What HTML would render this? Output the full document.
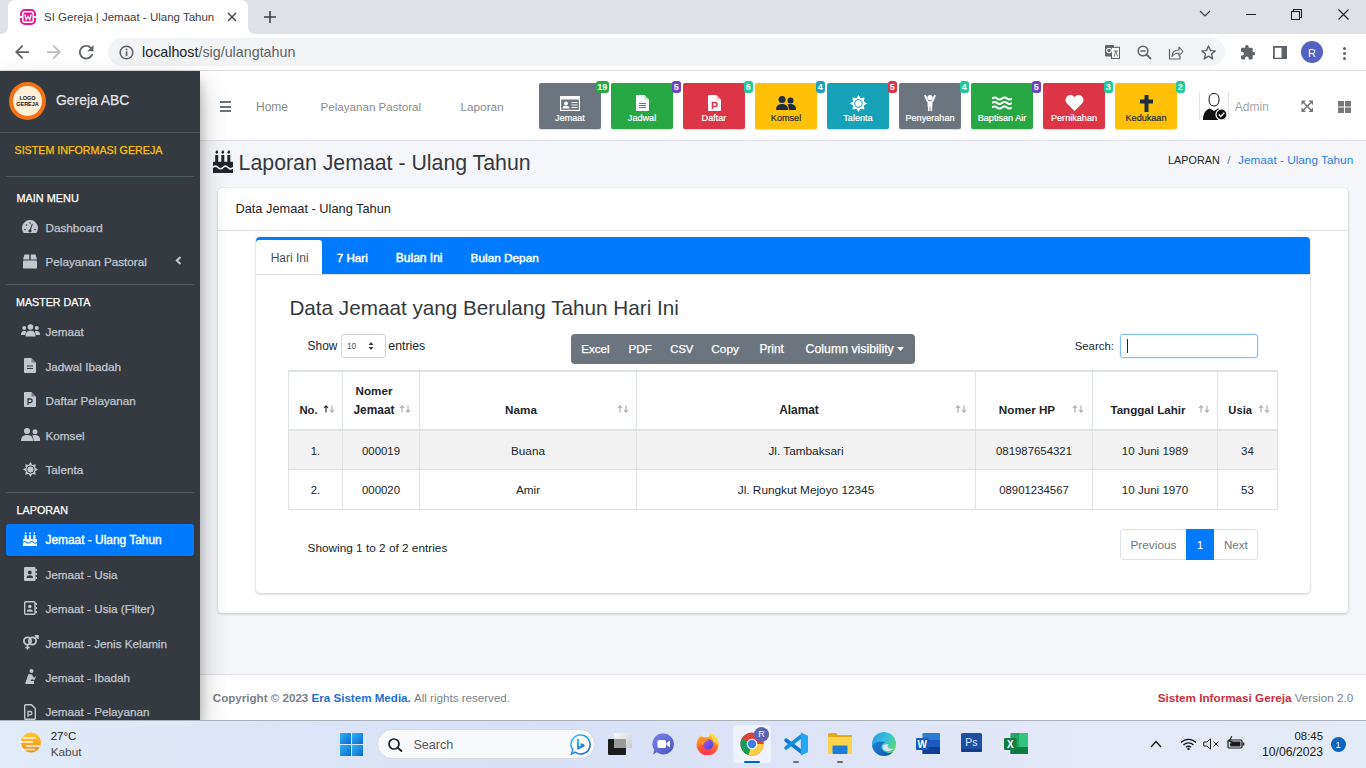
<!DOCTYPE html>
<html><head><meta charset="utf-8">
<style>
*{box-sizing:border-box;margin:0;padding:0}
html,body{width:1366px;height:768px;overflow:hidden;font-family:"Liberation Sans",sans-serif;background:#f4f6f9;position:relative}
.t{position:absolute;white-space:nowrap}
.r{position:absolute}
</style></head><body>
<div class="r" style="left:0px;top:0px;width:1366px;height:34px;background:#dee1e6;"></div>
<div class="r" style="left:0px;top:34px;width:1366px;height:37px;background:#fff;"></div>
<div class="r" style="left:0px;top:70px;width:1366px;height:1px;background:#dadce0;"></div>
<svg class="r" style="left:0;top:0" width="260" height="34" viewBox="0 0 260 34"><path d="M0 34 Q8 34 8 26 L8 8 Q8 0 16 0 L240 0 Q248 0 248 8 L248 26 Q248 34 256 34 Z" fill="#fff"/></svg>
<svg class="r" style="left:20px;top:9px;" width="16" height="16" viewBox="0 0 16 16"><rect x="1" y="1" width="14" height="14" rx="4" fill="none" stroke="#e6198f" stroke-width="2"/><rect x="3.5" y="3.5" width="9" height="9" rx="1.5" fill="#e6198f"/><path d="M4.8 5.5 L6.2 10.5 L8 7.5 L9.8 10.5 L11.2 5.5" fill="none" stroke="#fff" stroke-width="1.3"/><rect x="0" y="7" width="2" height="2" fill="#fff"/><rect x="14" y="7" width="2" height="2" fill="#fff"/></svg>
<div class="t" style="top:7.02px;font-size:11.5px;line-height:20px;color:#3c4043;left:44px;">SI Gereja | Jemaat - Ulang Tahun</div>
<svg class="r" style="left:227px;top:12px;" width="10" height="10" viewBox="0 0 10 10"><path d="M1 1L9 9M9 1L1 9" stroke="#3c4043" stroke-width="1.4"/></svg>
<svg class="r" style="left:264px;top:11px;" width="12" height="12" viewBox="0 0 12 12"><path d="M6 0V12M0 6H12" stroke="#3c4043" stroke-width="1.6"/></svg>
<svg class="r" style="left:1199px;top:10px;" width="12" height="8" viewBox="0 0 12 8"><path d="M1 1L6 6L11 1" fill="none" stroke="#3c4043" stroke-width="1.2"/></svg>
<div class="r" style="left:1246px;top:14px;width:10px;height:1px;background:#202124;"></div>
<svg class="r" style="left:1291px;top:9px;" width="12" height="11" viewBox="0 0 12 11"><rect x="0.5" y="2.5" width="8" height="8" fill="none" stroke="#202124" stroke-width="1.1"/><path d="M2.5 2.5V0.5H10.5V8.5H8.5" fill="none" stroke="#202124" stroke-width="1.1"/></svg>
<svg class="r" style="left:1338px;top:9px;" width="11" height="11" viewBox="0 0 11 11"><path d="M0.5 0.5L10.5 10.5M10.5 0.5L0.5 10.5" stroke="#202124" stroke-width="1.2"/></svg>
<svg class="r" style="left:15px;top:45px;" width="14" height="14" viewBox="4 4 16 16"><path d="M20 11H7.83l5.59-5.59L12 4l-8 8 8 8 1.41-1.41L7.83 13H20v-2z" fill="#5f6368"/></svg>
<svg class="r" style="left:47px;top:45px;" width="14" height="14" viewBox="4 4 16 16"><path d="M12 4l-1.41 1.41L16.17 11H4v2h12.17l-5.58 5.59L12 20l8-8z" fill="#babcbe"/></svg>
<svg class="r" style="left:79px;top:45px;" width="14.5" height="14.5" viewBox="4 4 16 16"><path d="M17.65 6.35C16.2 4.9 14.21 4 12 4c-4.42 0-7.99 3.58-7.99 8s3.57 8 7.99 8c3.73 0 6.84-2.55 7.73-6h-2.08c-.82 2.33-3.04 4-5.650 4-3.31 0-6-2.69-6-6s2.69-6 6-6c1.66 0 3.14.69 4.22 1.78L13 11h7V4l-2.35 2.35z" fill="#5f6368"/></svg>
<div class="r" style="left:108px;top:38px;width:1117px;height:28px;background:#f1f3f4;border-radius:14px;"></div>
<svg class="r" style="left:119px;top:45px;" width="15" height="15" viewBox="0 0 15 15"><circle cx="7.5" cy="7.5" r="6.3" fill="none" stroke="#5f6368" stroke-width="1.6"/><rect x="6.7" y="6.3" width="1.7" height="4.8" fill="#5f6368"/><rect x="6.7" y="3.6" width="1.7" height="1.7" fill="#5f6368"/></svg>
<div class="t" style="top:41.65px;font-size:14.3px;line-height:20px;color:#202124;left:142px;">localhost<span style="color:#5f6368">/sig/ulangtahun</span></div>
<svg class="r" style="left:1105px;top:45px;" width="15" height="14" viewBox="0 0 15 14"><rect x="0" y="0" width="9" height="11.5" rx="1" fill="#5f6368"/><rect x="6.5" y="2.3" width="8" height="11.2" fill="#fff" stroke="#5f6368" stroke-width="1.1"/><circle cx="4" cy="5.5" r="2.3" fill="none" stroke="#fff" stroke-width="1.1"/><path d="M8.5 6H13M10.7 6L9.3 11.5M10.7 6L12.6 11.5" stroke="#5f6368" stroke-width="0.9" fill="none"/></svg>
<svg class="r" style="left:1137px;top:45px;" width="15" height="15" viewBox="0 0 15 15"><circle cx="6" cy="6" r="4.8" fill="none" stroke="#5f6368" stroke-width="1.6"/><path d="M9.5 9.5L14 14" stroke="#5f6368" stroke-width="1.8"/><path d="M3.5 6H8.5" stroke="#5f6368" stroke-width="1.5"/></svg>
<svg class="r" style="left:1168px;top:45px;" width="16" height="15" viewBox="0 0 16 15"><path d="M1.5 4V14H12V11" fill="none" stroke="#5f6368" stroke-width="1.2"/><path d="M4 11.5C4 7 7 5 11 5V2L15 6.5L11 11V8C8 8 6 9 4 11.5Z" fill="none" stroke="#5f6368" stroke-width="1.1" stroke-linejoin="round"/></svg>
<svg class="r" style="left:1201px;top:45px;" width="15" height="15" viewBox="0 0 15 15"><path d="M7.5 1L9.4 5.6L14.2 5.9L10.5 9L11.7 13.8L7.5 11.1L3.3 13.8L4.5 9L0.8 5.9L5.6 5.6Z" fill="none" stroke="#5f6368" stroke-width="1.4" stroke-linejoin="round"/></svg>
<svg class="r" style="left:1240.5px;top:45px;" width="14.5" height="14.5" viewBox="2 1 21 21"><path d="M20.5 11H19V7c0-1.1-.9-2-2-2h-4V3.5C13 2.12 11.88 1 10.5 1S8 2.12 8 3.5V5H4c-1.1 0-1.99.9-1.99 2v3.8H3.5c1.49 0 2.7 1.21 2.7 2.7s-1.21 2.7-2.7 2.7H2V20c0 1.1.9 2 2 2h3.8v-1.5c0-1.49 1.21-2.7 2.7-2.7 1.490 0 2.7 1.21 2.7 2.7V22H17c1.1 0 2-.9 2-2v-4h1.5c1.38 0 2.5-1.12 2.5-2.5S21.88 11 20.5 11z" fill="#5f6368"/></svg>
<svg class="r" style="left:1273px;top:45.5px;" width="14" height="13.5" viewBox="0 0 14 13.5"><rect x="0.9" y="0.9" width="12.2" height="11.7" fill="none" stroke="#5f6368" stroke-width="1.8"/><rect x="8.5" y="0.9" width="4.6" height="11.7" fill="#5f6368"/></svg>
<div class="r" style="left:1301px;top:41px;width:22px;height:22px;border-radius:50%;background:#5462c2"></div>
<div class="t" style="top:42.69px;font-size:11px;line-height:20px;color:#fff;left:1301.0px;width:22px;text-align:center;left:1301px;">R</div>
<div class="r" style="left:1343px;top:47px;width:3px;height:3px;background:#5f6368;border-radius:50%;"></div>
<div class="r" style="left:1343px;top:52px;width:3px;height:3px;background:#5f6368;border-radius:50%;"></div>
<div class="r" style="left:1343px;top:57px;width:3px;height:3px;background:#5f6368;border-radius:50%;"></div>
<div class="r" style="left:0px;top:71px;width:200px;height:649px;background:#343a40;box-shadow:0 14px 28px rgba(0,0,0,.25),0 10px 10px rgba(0,0,0,.22);z-index:5;"></div>
<div class="r" style="left:0;top:71px;width:200px;height:649px;z-index:6;overflow:hidden">
<div class="r" style="left:9px;top:81.5px;width:37px;height:38.5px;border-radius:50%;background:#fdf0d6;border:4px solid #f47216;margin-top:-71px"></div>
<div class="t" style="left:12px;top:24px;width:31px;text-align:center;font-size:5.5px;line-height:6px;font-weight:bold;color:#111">LOGO<br>GEREJA</div>
<div class="t" style="top:18.98px;font-size:13.9px;line-height:20px;color:rgba(255,255,255,.85);left:56px;-webkit-text-stroke:0.25px;">Gereja ABC</div>
<div class="r" style="left:0;top:61px;width:200px;height:1px;background:#4b545c"></div>
<div class="t" style="top:69.29px;font-size:10.7px;line-height:20px;color:#ffc107;left:14.5px;-webkit-text-stroke:0.25px;">SISTEM INFORMASI GEREJA</div>
<div class="r" style="left:6px;top:105px;width:188px;height:1px;background:#4f5962"></div>
<div class="t" style="top:116.82px;font-size:10.9px;line-height:20px;color:#fff;left:16.5px;-webkit-text-stroke:0.25px;">MAIN MENU</div>
<div class="t" style="top:146.95px;font-size:11.7px;line-height:20px;color:#c2c7d0;left:45.5px;-webkit-text-stroke:0.25px;">Dashboard</div>
<div class="t" style="top:180.85px;font-size:11.7px;line-height:20px;color:#c2c7d0;left:45.5px;-webkit-text-stroke:0.25px;">Pelayanan Pastoral</div>
<div class="r" style="left:6px;top:213px;width:188px;height:1px;background:#4f5962"></div>
<div class="t" style="top:221.09px;font-size:10.7px;line-height:20px;color:#fff;left:16px;-webkit-text-stroke:0.25px;">MASTER DATA</div>
<div class="t" style="top:251.25px;font-size:11.7px;line-height:20px;color:#c2c7d0;left:45.5px;-webkit-text-stroke:0.25px;">Jemaat</div>
<div class="t" style="top:285.95px;font-size:11.7px;line-height:20px;color:#c2c7d0;left:45.5px;-webkit-text-stroke:0.25px;">Jadwal Ibadah</div>
<div class="t" style="top:320.25px;font-size:11.7px;line-height:20px;color:#c2c7d0;left:45.5px;-webkit-text-stroke:0.25px;">Daftar Pelayanan</div>
<div class="t" style="top:354.95px;font-size:11.7px;line-height:20px;color:#c2c7d0;left:45.5px;-webkit-text-stroke:0.25px;">Komsel</div>
<div class="t" style="top:388.75px;font-size:11.7px;line-height:20px;color:#c2c7d0;left:45.5px;-webkit-text-stroke:0.25px;">Talenta</div>
<div class="r" style="left:6px;top:421px;width:188px;height:1px;background:#4f5962"></div>
<div class="t" style="top:429.26px;font-size:10.8px;line-height:20px;color:#fff;left:16.5px;-webkit-text-stroke:0.25px;">LAPORAN</div>
<div class="r" style="left:6px;top:453px;width:188px;height:32px;background:#007bff;border-radius:3px;box-shadow:0 1px 3px rgba(0,0,0,.12)"></div>
<div class="t" style="top:459.38px;font-size:11.9px;line-height:20px;color:#fff;left:45.5px;-webkit-text-stroke:0.4px;">Jemaat - Ulang Tahun</div>
<div class="t" style="top:494.25px;font-size:11.7px;line-height:20px;color:#c2c7d0;left:45.5px;-webkit-text-stroke:0.25px;">Jemaat - Usia</div>
<div class="t" style="top:528.35px;font-size:11.7px;line-height:20px;color:#c2c7d0;left:45.5px;-webkit-text-stroke:0.25px;">Jemaat - Usia (Filter)</div>
<div class="t" style="top:563.15px;font-size:11.7px;line-height:20px;color:#c2c7d0;left:45.5px;-webkit-text-stroke:0.25px;">Jemaat - Jenis Kelamin</div>
<div class="t" style="top:596.65px;font-size:11.7px;line-height:20px;color:#c2c7d0;left:45.5px;-webkit-text-stroke:0.25px;">Jemaat - Ibadah</div>
<div class="t" style="top:630.95px;font-size:11.7px;line-height:20px;color:#c2c7d0;left:45.5px;-webkit-text-stroke:0.25px;">Jemaat - Pelayanan</div>
<svg class="r" style="left:22px;top:149px;" width="16" height="13" viewBox="0 0 16 13"><path d="M1.76 13A8 8 0 1 1 14.24 13Z" fill="#c2c7d0"/><circle cx="8" cy="10.8" r="1.6" fill="#343a40"/><path d="M8 10.8L10.3 3.8" stroke="#343a40" stroke-width="1.1"/><circle cx="3" cy="9.5" r="0.8" fill="#343a40"/><circle cx="13" cy="9.5" r="0.8" fill="#343a40"/><circle cx="4.5" cy="5" r="0.8" fill="#343a40"/><circle cx="8" cy="3" r="0.8" fill="#343a40"/></svg>
<svg class="r" style="left:22px;top:183px;" width="16" height="15" viewBox="0 0 16 15"><path d="M1 5.5L2.5 0.5H7.3V5.5Z M8.7 0.5H13.5L15 5.5H8.7Z" fill="#c2c7d0"/><rect x="1" y="6.5" width="14" height="8" rx="1" fill="#c2c7d0"/></svg>
<svg class="r" style="left:21px;top:253px;" width="19" height="13" viewBox="0 0 19 13"><circle cx="9.5" cy="3" r="2.8" fill="#c2c7d0"/><circle cx="3.2" cy="4" r="2" fill="#c2c7d0"/><circle cx="15.8" cy="4" r="2" fill="#c2c7d0"/><path d="M4.5 12.5C4.5 8 6.5 6.8 9.5 6.8S14.5 8 14.5 12.5Z" fill="#c2c7d0"/><path d="M0 11C0 8.5 1 7 3.2 7S5 7.5 5 8L4 11Z M19 11C19 8.5 18 7 15.8 7S14 7.5 14 8L15 11Z" fill="#c2c7d0"/></svg>
<svg class="r" style="left:24px;top:287px;" width="12" height="15" viewBox="0 0 12 15"><path d="M0 1A1 1 0 0 1 1 0H7.5L12 4.5V14A1 1 0 0 1 11 15H1A1 1 0 0 1 0 14Z" fill="#c2c7d0"/><path d="M7.5 0V4.5H12" fill="#343a40" opacity=".5"/><path d="M3 8H9M3 10.5H9" stroke="#343a40" stroke-width="1"/></svg>
<svg class="r" style="left:24px;top:321px;" width="12" height="15" viewBox="0 0 12 15"><path d="M0 1A1 1 0 0 1 1 0H7.5L12 4.5V14A1 1 0 0 1 11 15H1A1 1 0 0 1 0 14Z" fill="#c2c7d0"/><path d="M7.5 0V4.5H12" fill="#343a40" opacity=".5"/><path d="M4 13V7H6.3A1.8 1.8 0 0 1 6.3 10.6H4" fill="none" stroke="#343a40" stroke-width="1.3"/></svg>
<svg class="r" style="left:21px;top:357px;" width="19" height="13" viewBox="0 0 19 13"><circle cx="6" cy="3" r="3" fill="#c2c7d0"/><circle cx="14" cy="3.8" r="2.5" fill="#c2c7d0"/><path d="M0 13C0 9 2 7 6 7S12 9 12 13Z" fill="#c2c7d0"/><path d="M12.5 13C12.5 10 12 8.5 11 7.6C11.8 7.2 12.8 7 14 7C17 7 19 8.5 19 11.5V13Z" fill="#c2c7d0"/></svg>
<svg class="r" style="left:23px;top:391px;" width="15" height="15" viewBox="0 0 15 15"><path d="M7.5 0L9.3 2.9L12.8 2.2L12.1 5.7L15 7.5L12.1 9.3L12.8 12.8L9.3 12.1L7.5 15L5.7 12.1L2.2 12.8L2.9 9.3L0 7.5L2.9 5.7L2.2 2.2L5.7 2.9Z" fill="#c2c7d0"/><circle cx="7.5" cy="7.5" r="3.6" fill="none" stroke="#343a40" stroke-width="1"/></svg>
<svg class="r" style="left:23px;top:461px;" width="14" height="14" viewBox="0 0 14 14"><rect x="0" y="7.2" width="14" height="6.8" fill="#fff"/><path d="M0 10.3Q1.75 8.8 3.5 10.3T7 10.3T10.5 10.3T14 10.3" stroke="#007bff" stroke-width="1.1" fill="none"/><rect x="1.6" y="3" width="2.1" height="4.5" fill="#fff"/><rect x="5.95" y="3" width="2.1" height="4.5" fill="#fff"/><rect x="10.3" y="3" width="2.1" height="4.5" fill="#fff"/><path d="M2.65 0C3.8 1.1 3.8 2.3 2.65 2.3S1.5 1.1 2.65 0Z M7 0C8.15 1.1 8.15 2.3 7 2.3S5.85 1.1 7 0Z M11.35 0C12.5 1.1 12.5 2.3 11.35 2.3S10.2 1.1 11.35 0Z" fill="#fff"/></svg>
<svg class="r" style="left:24px;top:496px;" width="13" height="14" viewBox="0 0 13 14"><rect x="0" y="0" width="11.5" height="14" rx="1" fill="#c2c7d0"/><rect x="11.5" y="2" width="1.5" height="2" fill="#c2c7d0"/><rect x="11.5" y="6" width="1.5" height="2" fill="#c2c7d0"/><rect x="11.5" y="10" width="1.5" height="2" fill="#c2c7d0"/><circle cx="5.8" cy="5.5" r="1.9" fill="#343a40"/><path d="M2.5 11C2.5 9 4 8.3 5.8 8.3S9 9 9 11Z" fill="#343a40"/></svg>
<svg class="r" style="left:24px;top:530px;" width="13" height="14" viewBox="0 0 13 14"><rect x="0.7" y="0.7" width="10.3" height="12.6" rx="1" fill="none" stroke="#c2c7d0" stroke-width="1.4"/><rect x="11.5" y="2" width="1.5" height="2" fill="#c2c7d0"/><rect x="11.5" y="6" width="1.5" height="2" fill="#c2c7d0"/><rect x="11.5" y="10" width="1.5" height="2" fill="#c2c7d0"/><circle cx="5.8" cy="5.5" r="1.8" fill="#c2c7d0"/><path d="M2.8 10.8C2.8 9 4 8.3 5.8 8.3S8.8 9 8.8 10.8Z" fill="#c2c7d0"/></svg>
<svg class="r" style="left:22px;top:564px;" width="17" height="15" viewBox="0 0 17 15"><circle cx="5.5" cy="6" r="3.6" fill="none" stroke="#c2c7d0" stroke-width="1.8"/><path d="M5.5 9.6V14.5M3.3 12.5H7.7" stroke="#c2c7d0" stroke-width="1.6"/><circle cx="10.5" cy="6" r="3.6" fill="none" stroke="#c2c7d0" stroke-width="1.8"/><path d="M13 3.5L15.8 0.7M12.8 0.8H16V4" stroke="#c2c7d0" stroke-width="1.6" fill="none"/></svg>
<svg class="r" style="left:25px;top:598px;" width="11" height="15" viewBox="0 0 11 15"><circle cx="6.5" cy="2" r="2" fill="#c2c7d0"/><path d="M3.5 5L7 5.5L9 9L10.5 7L11 8L9 11.5L7 10L5.5 12H9V15H1A1 1 0 0 1 0.5 13.5Z" fill="#c2c7d0"/></svg>
<svg class="r" style="left:24px;top:633px;" width="12" height="16" viewBox="0 0 12 16"><path d="M0.7 1.5A0.8 0.8 0 0 1 1.5 0.7H7.5L11.3 4.5V14.5A0.8 0.8 0 0 1 10.5 15.3H1.5A0.8 0.8 0 0 1 0.7 14.5Z" fill="none" stroke="#c2c7d0" stroke-width="1.4"/><path d="M4 13V7.5H6.2A1.7 1.7 0 0 1 6.2 10.9H4" fill="none" stroke="#c2c7d0" stroke-width="1.3"/></svg>
<svg class="r" style="left:175px;top:185px;" width="7" height="9" viewBox="0 0 7 9"><path d="M5.5 1L1.8 4.5L5.5 8" fill="none" stroke="#c2c7d0" stroke-width="2"/></svg>
</div>
<div class="r" style="left:200px;top:71px;width:1166px;height:70px;background:#fff;border-bottom:1px solid #dee2e6;"></div>
<div class="r" style="left:219.5px;top:101px;width:11.5px;height:2px;background:#6c757d;"></div>
<div class="r" style="left:219.5px;top:105.5px;width:11.5px;height:2px;background:#6c757d;"></div>
<div class="r" style="left:219.5px;top:110px;width:11.5px;height:2px;background:#6c757d;"></div>
<div class="t" style="top:96.64px;font-size:12px;line-height:20px;color:rgba(0,0,0,.5);left:256px;">Home</div>
<div class="t" style="top:96.78px;font-size:11.6px;line-height:20px;color:rgba(0,0,0,.5);left:320.6px;">Pelayanan Pastoral</div>
<div class="t" style="top:96.71px;font-size:11.8px;line-height:20px;color:rgba(0,0,0,.5);left:460.4px;">Laporan</div>
<div class="r" style="left:539px;top:83px;width:62px;height:46px;background:#6c757d;border-radius:2px;box-shadow:0 1px 1px rgba(0,0,0,.15);"></div>
<svg class="r" style="left:560.0px;top:95.5px;" width="20" height="15" viewBox="0 0 20 15"><rect x="0.5" y="0.5" width="19" height="14" fill="none" stroke="#fff" stroke-width="1.3"/><rect x="0.5" y="0.5" width="19" height="3" fill="#fff"/><circle cx="6" cy="7.5" r="2" fill="#fff"/><path d="M2.5 12.5C2.5 10.5 4 9.8 6 9.8S9.5 10.5 9.5 12.5Z" fill="#fff"/><path d="M11.5 6.5H17.5M11.5 9H17.5M11.5 11.5H17.5" stroke="#fff" stroke-width="1.2"/></svg>
<div class="t" style="top:108.15px;font-size:9.1px;line-height:20px;color:#fff;left:539.0px;width:62px;text-align:center;-webkit-text-stroke:0.2px;">Jemaat</div>
<div class="r" style="left:595.5px;top:81px;width:13.5px;height:11.5px;background:#28a745;border-radius:3px;"></div>
<div class="t" style="top:77.28px;font-size:9px;line-height:20px;color:#fff;font-weight:bold;left:593.5px;width:17.5px;text-align:center;">19</div>
<div class="r" style="left:611px;top:83px;width:62px;height:46px;background:#28a745;border-radius:2px;box-shadow:0 1px 1px rgba(0,0,0,.15);"></div>
<svg class="r" style="left:635.5px;top:95px;" width="13" height="16" viewBox="0 0 13 16"><path d="M0 0.8A0.8 0.8 0 0 1 0.8 0H8.5L13 4.5V15.2A0.8 0.8 0 0 1 12.2 16H0.8A0.8 0.8 0 0 1 0 15.2Z" fill="#fff"/><path d="M8.5 0V4.5H13Z" fill="#28a745" opacity=".35"/><path d="M3 8.5H10M3 10.5H10M3 12.5H10" stroke="#28a745" stroke-width="1"/></svg>
<div class="t" style="top:108.15px;font-size:9.1px;line-height:20px;color:#fff;left:611.0px;width:62px;text-align:center;-webkit-text-stroke:0.2px;">Jadwal</div>
<div class="r" style="left:671.5px;top:81px;width:9.5px;height:11.5px;background:#6f42c1;border-radius:3px;"></div>
<div class="t" style="top:77.28px;font-size:9px;line-height:20px;color:#fff;font-weight:bold;left:669.5px;width:13.5px;text-align:center;">5</div>
<div class="r" style="left:683px;top:83px;width:62px;height:46px;background:#dc3545;border-radius:2px;box-shadow:0 1px 1px rgba(0,0,0,.15);"></div>
<svg class="r" style="left:707.5px;top:95px;" width="13" height="16" viewBox="0 0 13 16"><path d="M0 0.8A0.8 0.8 0 0 1 0.8 0H8.5L13 4.5V15.2A0.8 0.8 0 0 1 12.2 16H0.8A0.8 0.8 0 0 1 0 15.2Z" fill="#fff"/><path d="M8.5 0V4.5H13Z" fill="#dc3545" opacity=".35"/><path d="M4.5 14V7.5H7A2 2 0 0 1 7 11.5H4.5" fill="none" stroke="#dc3545" stroke-width="1.6"/></svg>
<div class="t" style="top:108.15px;font-size:9.1px;line-height:20px;color:#fff;left:683.0px;width:62px;text-align:center;-webkit-text-stroke:0.2px;">Daftar</div>
<div class="r" style="left:743.5px;top:81px;width:9.5px;height:11.5px;background:#20c997;border-radius:3px;"></div>
<div class="t" style="top:77.28px;font-size:9px;line-height:20px;color:#fff;font-weight:bold;left:741.5px;width:13.5px;text-align:center;">6</div>
<div class="r" style="left:755px;top:83px;width:62px;height:46px;background:#ffc107;border-radius:2px;box-shadow:0 1px 1px rgba(0,0,0,.15);"></div>
<svg class="r" style="left:776.0px;top:96px;" width="20" height="14" viewBox="0 0 20 14"><circle cx="6" cy="3.5" r="3.5" fill="#1f2d3d"/><circle cx="14.5" cy="4.5" r="3" fill="#1f2d3d"/><path d="M0 14C0 10 2 8 6 8S12 10 12 14Z" fill="#1f2d3d"/><path d="M12.8 14C12.8 11 12.3 9.5 11.2 8.6C12 8.2 13 8 14.5 8C17.5 8 20 9.5 20 12.5V14Z" fill="#1f2d3d"/></svg>
<div class="t" style="top:108.15px;font-size:9.1px;line-height:20px;color:#1f2d3d;left:755.0px;width:62px;text-align:center;-webkit-text-stroke:0.2px;">Komsel</div>
<div class="r" style="left:815.5px;top:81px;width:9.5px;height:11.5px;background:#17a2b8;border-radius:3px;"></div>
<div class="t" style="top:77.28px;font-size:9px;line-height:20px;color:#fff;font-weight:bold;left:813.5px;width:13.5px;text-align:center;">4</div>
<div class="r" style="left:827px;top:83px;width:62px;height:46px;background:#17a2b8;border-radius:2px;box-shadow:0 1px 1px rgba(0,0,0,.15);"></div>
<svg class="r" style="left:849.5px;top:94.5px;" width="17" height="17" viewBox="0 0 17 17"><path d="M8.5 0L10.5 3.2L14.5 2.5L13.8 6.5L17 8.5L13.8 10.5L14.5 14.5L10.5 13.8L8.5 17L6.5 13.8L2.5 14.5L3.2 10.5L0 8.5L3.2 6.5L2.5 2.5L6.5 3.2Z" fill="#fff"/><circle cx="8.5" cy="8.5" r="4.2" fill="#17a2b8"/><circle cx="8.5" cy="8.5" r="3.2" fill="#fff"/></svg>
<div class="t" style="top:108.15px;font-size:9.1px;line-height:20px;color:#fff;left:827.0px;width:62px;text-align:center;-webkit-text-stroke:0.2px;">Talenta</div>
<div class="r" style="left:887.5px;top:81px;width:9.5px;height:11.5px;background:#dc3545;border-radius:3px;"></div>
<div class="t" style="top:77.28px;font-size:9px;line-height:20px;color:#fff;font-weight:bold;left:885.5px;width:13.5px;text-align:center;">5</div>
<div class="r" style="left:899px;top:83px;width:62px;height:46px;background:#6c757d;border-radius:2px;box-shadow:0 1px 1px rgba(0,0,0,.15);"></div>
<svg class="r" style="left:924.0px;top:95px;" width="12" height="16" viewBox="0 0 12 16"><circle cx="6" cy="2.6" r="2.6" fill="#fff"/><path d="M1.2 0.8L3.6 6.2M10.8 0.8L8.4 6.2" stroke="#fff" stroke-width="1.9" stroke-linecap="round"/><path d="M3.6 6.2H8.4V11.5H8.1V16H6.4V12H5.6V16H3.9V11.5H3.6Z" fill="#fff"/></svg>
<div class="t" style="top:108.15px;font-size:9.1px;line-height:20px;color:#fff;left:899.0px;width:62px;text-align:center;-webkit-text-stroke:0.2px;">Penyerahan</div>
<div class="r" style="left:959.5px;top:81px;width:9.5px;height:11.5px;background:#20c997;border-radius:3px;"></div>
<div class="t" style="top:77.28px;font-size:9px;line-height:20px;color:#fff;font-weight:bold;left:957.5px;width:13.5px;text-align:center;">4</div>
<div class="r" style="left:971px;top:83px;width:62px;height:46px;background:#28a745;border-radius:2px;box-shadow:0 1px 1px rgba(0,0,0,.15);"></div>
<svg class="r" style="left:992.0px;top:96px;" width="20" height="14" viewBox="0 0 20 14"><path d="M0 2.5Q2.5 0.5 5 2.5T10 2.5T15 2.5T20 2.5" fill="none" stroke="#fff" stroke-width="2"/><path d="M0 7Q2.5 5 5 7T10 7T15 7T20 7" fill="none" stroke="#fff" stroke-width="2"/><path d="M0 11.5Q2.5 9.5 5 11.5T10 11.5T15 11.5T20 11.5" fill="none" stroke="#fff" stroke-width="2"/></svg>
<div class="t" style="top:108.15px;font-size:9.1px;line-height:20px;color:#fff;left:971.0px;width:62px;text-align:center;-webkit-text-stroke:0.2px;">Baptisan Air</div>
<div class="r" style="left:1031.5px;top:81px;width:9.5px;height:11.5px;background:#6f42c1;border-radius:3px;"></div>
<div class="t" style="top:77.28px;font-size:9px;line-height:20px;color:#fff;font-weight:bold;left:1029.5px;width:13.5px;text-align:center;">5</div>
<div class="r" style="left:1043px;top:83px;width:62px;height:46px;background:#dc3545;border-radius:2px;box-shadow:0 1px 1px rgba(0,0,0,.15);"></div>
<svg class="r" style="left:1064.5px;top:95px;" width="19" height="16" viewBox="0 0 19 16"><path d="M9.5 16L1.5 8A4.5 4.5 0 0 1 9.5 2A4.5 4.5 0 0 1 17.5 8Z" fill="#fff"/></svg>
<div class="t" style="top:108.15px;font-size:9.1px;line-height:20px;color:#fff;left:1043.0px;width:62px;text-align:center;-webkit-text-stroke:0.2px;">Pernikahan</div>
<div class="r" style="left:1103.5px;top:81px;width:9.5px;height:11.5px;background:#20c997;border-radius:3px;"></div>
<div class="t" style="top:77.28px;font-size:9px;line-height:20px;color:#fff;font-weight:bold;left:1101.5px;width:13.5px;text-align:center;">3</div>
<div class="r" style="left:1115px;top:83px;width:62px;height:46px;background:#ffc107;border-radius:2px;box-shadow:0 1px 1px rgba(0,0,0,.15);"></div>
<svg class="r" style="left:1139.5px;top:94.5px;" width="13" height="17" viewBox="0 0 13 17"><path d="M4.5 0H8.5V4.5H13V8.5H8.5V17H4.5V8.5H0V4.5H4.5Z" fill="#1f2d3d"/></svg>
<div class="t" style="top:108.15px;font-size:9.1px;line-height:20px;color:#1f2d3d;left:1115.0px;width:62px;text-align:center;-webkit-text-stroke:0.2px;">Kedukaan</div>
<div class="r" style="left:1175.5px;top:81px;width:9.5px;height:11.5px;background:#20c997;border-radius:3px;"></div>
<div class="t" style="top:77.28px;font-size:9px;line-height:20px;color:#fff;font-weight:bold;left:1173.5px;width:13.5px;text-align:center;">2</div>
<div class="r" style="left:1199px;top:92px;width:1px;height:28px;background:#e2e2e2;"></div>
<div class="r" style="left:1228px;top:92px;width:1px;height:28px;background:#e2e2e2;"></div>
<svg class="r" style="left:1200px;top:92px;" width="28" height="28" viewBox="0 0 28 28"><path d="M9 8C9 3 11 1.5 14 1.5S19 3 19 8C19 11 17.5 14 14 14S9 11 9 8Z" fill="#fff" stroke="#111" stroke-width="1"/><path d="M3 28C3 21 6 17.5 10 16.5L14 19L18 16.5C22 17.5 25 21 25 28Z" fill="#111"/><circle cx="21.5" cy="22.5" r="5.5" fill="#111" stroke="#fff" stroke-width="1.2"/><path d="M18.8 22.5L20.8 24.5L24.3 20.8" fill="none" stroke="#fff" stroke-width="1.5"/></svg>
<div class="t" style="top:96.64px;font-size:12px;line-height:20px;color:rgba(0,0,0,.4);left:1234.8px;">Admin</div>
<svg class="r" style="left:1300.5px;top:99.5px;" width="12.5" height="12.5" viewBox="0 0 12.5 12.5"><path d="M2 2L10.5 10.5M10.5 2L2 10.5" stroke="#777" stroke-width="1.5"/><path d="M0.5 0.5H5L0.5 5Z M12 0.5H7.5L12 5Z M0.5 12H5L0.5 7.5Z M12 12H7.5L12 7.5Z" fill="#777"/></svg>
<svg class="r" style="left:1338px;top:100.5px;" width="13" height="12" viewBox="0 0 13 12"><rect x="0" y="0" width="6" height="5.5" fill="#777"/><rect x="7" y="0" width="6" height="5.5" fill="#777"/><rect x="0" y="6.5" width="6" height="5.5" fill="#777"/><rect x="7" y="6.5" width="6" height="5.5" fill="#777"/></svg>
<svg class="r" style="left:213px;top:150px;" width="20" height="23" viewBox="0 0 20 23"><rect x="0" y="11.8" width="20" height="11.2" fill="#212529"/><path d="M0 17.5Q2.5 15 5 17.5T10 17.5T15 17.5T20 17.5" stroke="#f4f6f9" stroke-width="1.7" fill="none"/><rect x="2.2" y="5" width="3" height="7" fill="#212529"/><rect x="8.3" y="5" width="3" height="7" fill="#212529"/><rect x="14.3" y="5" width="3" height="7" fill="#212529"/><path d="M4 0C5.6 1.8 5.6 3.7 3.7 3.7S2.2 1.8 4 0Z M10 0C11.6 1.8 11.6 3.7 9.7 3.7S8.2 1.8 10 0Z M16 0C17.6 1.8 17.6 3.7 15.7 3.7S14.2 1.8 16 0Z" fill="#212529"/></svg>
<div class="t" style="top:152.52px;font-size:21.3px;line-height:20px;color:#34393e;left:238.6px;">Laporan Jemaat - Ulang Tahun</div>
<div class="t" style="top:150.36px;font-size:10.8px;line-height:20px;color:#212529;right:146.29999999999995px;">LAPORAN</div>
<div class="t" style="top:150.05px;font-size:11.7px;line-height:20px;color:#6c757d;right:135.5999999999999px;">/</div>
<div class="t" style="top:150.01px;font-size:11.8px;line-height:20px;color:#2a80e6;right:12.799999999999955px;">Jemaat - Ulang Tahun</div>
<div class="r" style="left:218px;top:187.5px;width:1130px;height:425.5px;background:#fff;border-radius:4px;box-shadow:0 0 1px rgba(0,0,0,.125),0 1px 3px rgba(0,0,0,.2);"></div>
<div class="t" style="top:198.96px;font-size:12.8px;line-height:20px;color:#212529;left:235.4px;">Data Jemaat - Ulang Tahun</div>
<div class="r" style="left:218px;top:230px;width:1130px;height:1px;background:rgba(0,0,0,.125);"></div>
<div class="r" style="left:256px;top:237px;width:1054px;height:355.5px;background:#fff;border-radius:4px;box-shadow:0 0 1px rgba(0,0,0,.125),0 1px 3px rgba(0,0,0,.2);"></div>
<div class="r" style="left:256px;top:237px;width:1054px;height:37px;background:#007bff;border-radius:4px 4px 0 0;"></div>
<div class="r" style="left:256px;top:240px;width:66px;height:34px;background:#fff;border-radius:3px 3px 0 0;"></div>
<div class="r" style="left:256px;top:274px;width:1054px;height:1px;background:#dee2e6;"></div>
<div class="t" style="top:248.04px;font-size:12px;line-height:20px;color:#495057;left:270.7px;">Hari Ini</div>
<div class="t" style="top:248.18px;font-size:11.6px;line-height:20px;color:#fff;left:336.8px;-webkit-text-stroke:0.45px;">7 Hari</div>
<div class="t" style="top:248.04px;font-size:12px;line-height:20px;color:#fff;left:395.8px;-webkit-text-stroke:0.45px;">Bulan Ini</div>
<div class="t" style="top:248.11px;font-size:11.8px;line-height:20px;color:#fff;left:470.6px;-webkit-text-stroke:0.45px;">Bulan Depan</div>
<div class="t" style="top:297.73px;font-size:20.7px;line-height:20px;color:#34393e;left:289.4px;">Data Jemaat yang Berulang Tahun Hari Ini</div>
<div class="t" style="top:335.68px;font-size:11.9px;line-height:20px;color:#212529;left:307.6px;">Show</div>
<div class="r" style="left:340.5px;top:334px;width:45px;height:23.5px;background:#fff;border:1px solid #ced4da;border-radius:3px;"></div>
<div class="t" style="top:336.42px;font-size:8.3px;line-height:20px;color:#495057;left:347px;">10</div>
<svg class="r" style="left:368px;top:341px;" width="6" height="10" viewBox="0 0 6 10"><path d="M0.5 4L3 1L5.5 4Z M0.5 6L3 9L5.5 6Z" fill="#343a40"/></svg>
<div class="t" style="top:335.54px;font-size:12.3px;line-height:20px;color:#212529;left:388.3px;">entries</div>
<div class="r" style="left:571px;top:334px;width:344px;height:30px;background:#6c757d;border-radius:4px;"></div>
<div class="t" style="top:339.08px;font-size:11.6px;line-height:20px;color:#fff;left:581.3px;-webkit-text-stroke:0.25px;">Excel</div>
<div class="t" style="top:339.08px;font-size:11.6px;line-height:20px;color:#fff;left:628.6px;-webkit-text-stroke:0.25px;">PDF</div>
<div class="t" style="top:339.22px;font-size:11.2px;line-height:20px;color:#fff;left:670.3px;-webkit-text-stroke:0.25px;">CSV</div>
<div class="t" style="top:339.01px;font-size:11.8px;line-height:20px;color:#fff;left:711.3px;-webkit-text-stroke:0.25px;">Copy</div>
<div class="t" style="top:338.98px;font-size:11.9px;line-height:20px;color:#fff;left:759.4px;-webkit-text-stroke:0.25px;">Print</div>
<div class="t" style="top:338.84px;font-size:12.3px;line-height:20px;color:#fff;left:805.6px;-webkit-text-stroke:0.25px;">Column visibility</div>
<svg class="r" style="left:897px;top:347px;" width="7" height="4" viewBox="0 0 7 4"><path d="M0 0H7L3.5 4Z" fill="#fff"/></svg>
<div class="t" style="top:335.85px;font-size:11.4px;line-height:20px;color:#212529;right:252.0999999999999px;">Search:</div>
<div class="r" style="left:1120px;top:334px;width:138px;height:24px;background:#fff;border:1px solid #80bdff;border-radius:3px;box-shadow:0 0 0 1px rgba(0,123,255,.08);"></div>
<div class="r" style="left:1127px;top:339px;width:1px;height:14px;background:#212529;"></div>
<div class="r" style="left:288.5px;top:370px;width:989.5px;height:140px;background:#fff;"></div>
<div class="r" style="left:288.5px;top:430px;width:989.5px;height:40px;background:#f2f2f2;"></div>
<div class="r" style="left:288.5px;top:370px;width:989.5px;height:2px;background:#dee2e6;"></div>
<div class="r" style="left:288.5px;top:428.5px;width:989.5px;height:2px;background:#dee2e6;"></div>
<div class="r" style="left:288.5px;top:469px;width:989.5px;height:1px;background:#dee2e6;"></div>
<div class="r" style="left:288.5px;top:509px;width:989.5px;height:1px;background:#dee2e6;"></div>
<div class="r" style="left:288px;top:370px;width:1px;height:140px;background:#dee2e6;"></div>
<div class="r" style="left:342px;top:370px;width:1px;height:140px;background:#dee2e6;"></div>
<div class="r" style="left:419px;top:370px;width:1px;height:140px;background:#dee2e6;"></div>
<div class="r" style="left:636px;top:370px;width:1px;height:140px;background:#dee2e6;"></div>
<div class="r" style="left:975px;top:370px;width:1px;height:140px;background:#dee2e6;"></div>
<div class="r" style="left:1092px;top:370px;width:1px;height:140px;background:#dee2e6;"></div>
<div class="r" style="left:1217px;top:370px;width:1px;height:140px;background:#dee2e6;"></div>
<div class="r" style="left:1277px;top:370px;width:1px;height:140px;background:#dee2e6;"></div>
<div class="t" style="top:400.08px;font-size:11.3px;line-height:20px;color:#212529;font-weight:bold;left:299.4px;">No.</div>
<div class="t" style="top:380.56px;font-size:11.65px;line-height:20px;color:#212529;font-weight:bold;left:339.0px;width:70px;text-align:center;">Nomer</div>
<div class="t" style="top:399.88px;font-size:11.9px;line-height:20px;color:#212529;font-weight:bold;left:339.0px;width:70px;text-align:center;">Jemaat</div>
<div class="t" style="top:399.95px;font-size:11.7px;line-height:20px;color:#212529;font-weight:bold;left:481.0px;width:80px;text-align:center;">Nama</div>
<div class="t" style="top:399.88px;font-size:11.9px;line-height:20px;color:#212529;font-weight:bold;left:749.0px;width:100px;text-align:center;">Alamat</div>
<div class="t" style="top:399.96px;font-size:11.65px;line-height:20px;color:#212529;font-weight:bold;left:977.0px;width:100px;text-align:center;">Nomer HP</div>
<div class="t" style="top:399.98px;font-size:11.6px;line-height:20px;color:#212529;font-weight:bold;left:1098.0px;width:100px;text-align:center;">Tanggal Lahir</div>
<div class="t" style="top:400.12px;font-size:11.2px;line-height:20px;color:#212529;font-weight:bold;left:1220.2px;width:40px;text-align:center;">Usia</div>
<svg class="r" style="left:323px;top:404.5px;" width="12" height="8" viewBox="0 0 12 8"><path d="M3 7.5V1M1 3L3 0.8L5 3" fill="none" stroke="#212529" stroke-width="1.1"/><path d="M9 0.5V7M7 5L9 7.2L11 5" fill="none" stroke="#aaa" stroke-width="1.1"/></svg>
<svg class="r" style="left:399px;top:404.5px;" width="12" height="8" viewBox="0 0 12 8"><path d="M3 7.5V1M1 3L3 0.8L5 3" fill="none" stroke="#aaa" stroke-width="1.1"/><path d="M9 0.5V7M7 5L9 7.2L11 5" fill="none" stroke="#aaa" stroke-width="1.1"/></svg>
<svg class="r" style="left:617px;top:404.5px;" width="12" height="8" viewBox="0 0 12 8"><path d="M3 7.5V1M1 3L3 0.8L5 3" fill="none" stroke="#aaa" stroke-width="1.1"/><path d="M9 0.5V7M7 5L9 7.2L11 5" fill="none" stroke="#aaa" stroke-width="1.1"/></svg>
<svg class="r" style="left:955px;top:404.5px;" width="12" height="8" viewBox="0 0 12 8"><path d="M3 7.5V1M1 3L3 0.8L5 3" fill="none" stroke="#aaa" stroke-width="1.1"/><path d="M9 0.5V7M7 5L9 7.2L11 5" fill="none" stroke="#aaa" stroke-width="1.1"/></svg>
<svg class="r" style="left:1072px;top:404.5px;" width="12" height="8" viewBox="0 0 12 8"><path d="M3 7.5V1M1 3L3 0.8L5 3" fill="none" stroke="#aaa" stroke-width="1.1"/><path d="M9 0.5V7M7 5L9 7.2L11 5" fill="none" stroke="#aaa" stroke-width="1.1"/></svg>
<svg class="r" style="left:1198px;top:404.5px;" width="12" height="8" viewBox="0 0 12 8"><path d="M3 7.5V1M1 3L3 0.8L5 3" fill="none" stroke="#aaa" stroke-width="1.1"/><path d="M9 0.5V7M7 5L9 7.2L11 5" fill="none" stroke="#aaa" stroke-width="1.1"/></svg>
<svg class="r" style="left:1258px;top:404.5px;" width="12" height="8" viewBox="0 0 12 8"><path d="M3 7.5V1M1 3L3 0.8L5 3" fill="none" stroke="#aaa" stroke-width="1.1"/><path d="M9 0.5V7M7 5L9 7.2L11 5" fill="none" stroke="#aaa" stroke-width="1.1"/></svg>
<div class="t" style="top:440.78px;font-size:11.3px;line-height:20px;color:#212529;left:290.5px;width:50px;text-align:center;">1.</div>
<div class="t" style="top:440.75px;font-size:11.4px;line-height:20px;color:#212529;left:346.0px;width:70px;text-align:center;">000019</div>
<div class="t" style="top:440.63px;font-size:11.75px;line-height:20px;color:#212529;left:428.0px;width:200px;text-align:center;">Buana</div>
<div class="t" style="top:440.61px;font-size:11.8px;line-height:20px;color:#212529;left:656.0px;width:300px;text-align:center;">Jl. Tambaksari</div>
<div class="t" style="top:440.75px;font-size:11.4px;line-height:20px;color:#212529;left:979.0px;width:110px;text-align:center;">081987654321</div>
<div class="t" style="top:440.68px;font-size:11.6px;line-height:20px;color:#212529;left:1100.0px;width:110px;text-align:center;">10 Juni 1989</div>
<div class="t" style="top:440.72px;font-size:11.5px;line-height:20px;color:#212529;left:1222.5px;width:50px;text-align:center;">34</div>
<div class="t" style="top:479.88px;font-size:11.3px;line-height:20px;color:#212529;left:290.5px;width:50px;text-align:center;">2.</div>
<div class="t" style="top:479.85px;font-size:11.4px;line-height:20px;color:#212529;left:346.0px;width:70px;text-align:center;">000020</div>
<div class="t" style="top:479.73px;font-size:11.75px;line-height:20px;color:#212529;left:428.0px;width:200px;text-align:center;">Amir</div>
<div class="t" style="top:479.71px;font-size:11.8px;line-height:20px;color:#212529;left:656.0px;width:300px;text-align:center;">Jl. Rungkut Mejoyo 12345</div>
<div class="t" style="top:479.85px;font-size:11.4px;line-height:20px;color:#212529;left:979.0px;width:110px;text-align:center;">08901234567</div>
<div class="t" style="top:479.78px;font-size:11.6px;line-height:20px;color:#212529;left:1100.0px;width:110px;text-align:center;">10 Juni 1970</div>
<div class="t" style="top:479.82px;font-size:11.5px;line-height:20px;color:#212529;left:1222.5px;width:50px;text-align:center;">53</div>
<div class="t" style="top:538.11px;font-size:11.8px;line-height:20px;color:#212529;left:307.6px;">Showing 1 to 2 of 2 entries</div>
<div class="r" style="left:1119.5px;top:529px;width:138.5px;height:31px;background:#fff;border:1px solid #dee2e6;border-radius:3px;"></div>
<div class="r" style="left:1186px;top:529px;width:28px;height:31px;background:#007bff;"></div>
<div class="t" style="top:535.21px;font-size:11.8px;line-height:20px;color:#6c757d;left:1130.5px;">Previous</div>
<div class="t" style="top:535.21px;font-size:11.8px;line-height:20px;color:#fff;left:1186.0px;width:28px;text-align:center;">1</div>
<div class="t" style="top:535.28px;font-size:11.6px;line-height:20px;color:#6c757d;left:1224px;">Next</div>
<div class="r" style="left:200px;top:674px;width:1166px;height:46px;background:#fff;border-top:1px solid #dee2e6;"></div>
<div class="t" style="top:688.18px;font-size:11.6px;line-height:20px;color:#78818a;font-weight:bold;left:212.8px;">Copyright &copy; 2023 <span style="color:#1f6fd0">Era Sistem Media.</span> <span style="font-weight:normal">All rights reserved.</span></div>
<div class="t" style="top:688.15px;font-size:11.7px;line-height:20px;color:#78818a;right:12.799999999999955px;"><b style="color:#c9303e">Sistem Informasi Gereja</b> Version 2.0</div>
<div class="r" style="left:0px;top:720px;width:1366px;height:48px;background:linear-gradient(90deg,#e1eaf6 0%,#dce5f6 22%,#d8e0f6 38%,#dde4f6 60%,#e3e9f6 80%,#e3ebf6 100%);z-index:10;"></div>
<div class="r" style="left:0px;top:720px;width:1366px;height:1px;background:#a9b0ba;z-index:10;"></div>
<div class="r" style="left:0;top:720px;width:1366px;height:48px;z-index:11">
<svg class="r" style="left:19px;top:12px;" width="23" height="21" viewBox="0 0 23 21"><defs><linearGradient id="sun" x1="0" y1="0" x2="0" y2="1"><stop offset="0" stop-color="#ffc928"/><stop offset="1" stop-color="#f28a1b"/></linearGradient></defs><circle cx="12" cy="10.5" r="10" fill="url(#sun)"/><path d="M4 6H17M0 10H14M7 14H21M3 17.5H16" stroke="#fff" stroke-width="1.3" opacity=".9"/></svg>
<div class="t" style="top:5.82px;font-size:11.5px;line-height:20px;color:#1a1a1a;left:50.7px;">27°C</div>
<div class="t" style="top:21.81px;font-size:11.8px;line-height:20px;color:#4d4d4d;left:50.7px;">Kabut</div>
<svg class="r" style="left:340px;top:13px;" width="23" height="23" viewBox="0 0 23 23"><defs><linearGradient id="win" x1="0" y1="0" x2="1" y2="1"><stop offset="0" stop-color="#2fb5f5"/><stop offset="1" stop-color="#0b67cf"/></linearGradient></defs><rect x="0" y="0" width="11" height="11" fill="url(#win)"/><rect x="12" y="0" width="11" height="11" fill="url(#win)"/><rect x="0" y="12" width="11" height="11" fill="url(#win)"/><rect x="12" y="12" width="11" height="11" fill="url(#win)"/></svg>
<div class="r" style="left:377px;top:9px;width:218px;height:30px;background:#f7f9fd;border-radius:15px;border:1px solid #d5dae3;"></div>
<svg class="r" style="left:387.5px;top:18px;" width="15" height="14" viewBox="0 0 15 14"><circle cx="6" cy="6" r="5" fill="none" stroke="#1b1b1b" stroke-width="1.7"/><path d="M9.6 9.6L14 13.5" stroke="#1b1b1b" stroke-width="1.9"/></svg>
<div class="t" style="top:14.63px;font-size:12.6px;line-height:20px;color:#5a5a5a;left:413.4px;">Search</div>
<svg class="r" style="left:569.5px;top:14px;" width="21" height="21" viewBox="0 0 21 21"><defs><linearGradient id="bing" x1="0" y1="0" x2="1" y2="1"><stop offset="0" stop-color="#36c2f5"/><stop offset="1" stop-color="#1b5fd6"/></linearGradient></defs><path d="M10.5 1A9.5 9.5 0 1 1 5 18.2L1.5 20L2.8 16A9.5 9.5 0 0 1 10.5 1Z" fill="#fff" stroke="url(#bing)" stroke-width="1.6"/><path d="M8 5V14.5L13.5 11.5L10.8 10" fill="none" stroke="url(#bing)" stroke-width="2.2" stroke-linejoin="round"/></svg>
<svg class="r" style="left:608px;top:13px;" width="24" height="22" viewBox="0 0 24 22"><defs><linearGradient id="tv" x1="0" y1="0" x2="1" y2="1"><stop offset="0" stop-color="#fafafa"/><stop offset="1" stop-color="#c8c8c8"/></linearGradient></defs><rect x="6" y="0" width="18" height="15" rx="1" fill="url(#tv)"/><rect x="0" y="6" width="18" height="16" rx="1" fill="#1c1c1c"/><rect x="6" y="6" width="12" height="9" fill="#9a9a9a"/></svg>
<svg class="r" style="left:652px;top:13px;" width="23" height="22" viewBox="0 0 23 22"><defs><linearGradient id="tm" x1="0" y1="0" x2="1" y2="1"><stop offset="0" stop-color="#7b83eb"/><stop offset="1" stop-color="#4b53bc"/></linearGradient></defs><path d="M11.5 0.5A10.5 10.5 0 1 1 5 19.3L1 21.5L2.2 16.8A10.5 10.5 0 0 1 11.5 0.5Z" fill="url(#tm)"/><rect x="5.5" y="7" width="8.5" height="8" rx="1.5" fill="#fff"/><path d="M14.5 10L18 7.5V14.5L14.5 12Z" fill="#fff"/></svg>
<svg class="r" style="left:696px;top:11.5px;" width="23" height="23.5" viewBox="0 0 23 23.5"><defs><radialGradient id="ff" cx=".45" cy=".95" r=".95"><stop offset="0" stop-color="#ff2d55"/><stop offset=".45" stop-color="#ff5a36"/><stop offset=".75" stop-color="#ff9a2e"/><stop offset="1" stop-color="#ffd23c"/></radialGradient><linearGradient id="fp" x1="0" y1="0" x2="1" y2="1"><stop offset="0" stop-color="#a05cf5"/><stop offset="1" stop-color="#4f3fd0"/></linearGradient></defs><circle cx="11.5" cy="12.5" r="11" fill="url(#ff)"/><ellipse cx="9.5" cy="2" rx="4.5" ry="3.2" fill="#dde5f6"/><path d="M13 0.5C18.5 2.5 23 7.5 22.5 13.5L17.5 9.5Z" fill="#ffd83d"/><circle cx="12" cy="12.2" r="5.3" fill="url(#fp)"/><path d="M3.5 6C6.5 5 10 6 12.5 8.5C9.5 8.5 8 10.5 7 13.5L3 10Z" fill="#ff8a2a"/></svg>
<div class="r" style="left:733px;top:5px;width:37.5px;height:38px;background:rgba(255,255,255,.55);border-radius:4px;"></div>
<svg class="r" style="left:740px;top:12px;" width="24" height="24" viewBox="0 0 24 24"><circle cx="12" cy="12" r="11.5" fill="#db4437"/><path d="M12 12L1.8 6.5A11.5 11.5 0 0 0 8.5 23Z" fill="#0f9d58"/><path d="M12 12L8.5 23A11.5 11.5 0 0 0 23.5 12L22.2 6.5Z" fill="#ffcd40"/><path d="M12 12H23.5A11.5 11.5 0 0 0 22.2 6.5Z" fill="#db4437"/><circle cx="12" cy="12" r="5.3" fill="#fff"/><circle cx="12" cy="12" r="4.2" fill="#3b7ce8"/></svg>
<div class="r" style="left:754px;top:7px;width:15px;height:15px;border-radius:50%;background:#5a63b8;color:#fff;font-size:9px;line-height:15px;text-align:center">R</div>
<div class="r" style="left:744px;top:40.5px;width:15.5px;height:2.5px;background:#0067c0;border-radius:2px;"></div>
<svg class="r" style="left:784px;top:12px;" width="24" height="24" viewBox="0 0 24 24"><path d="M2.2 8.2L18 20.3" stroke="#0c78c9" stroke-width="3.8" stroke-linecap="round"/><path d="M2.2 15.8L18 3.7" stroke="#1590dc" stroke-width="3.8" stroke-linecap="round"/><path d="M16.8 0.5L24 3.8V20.2L16.8 23.5Z" fill="#26a5f0"/></svg>
<div class="r" style="left:793px;top:40.5px;width:5.5px;height:2.5px;background:#6e6e6e;border-radius:2px;"></div>
<svg class="r" style="left:828px;top:13px;" width="24" height="21" viewBox="0 0 24 21"><path d="M0 1.5A1.5 1.5 0 0 1 1.5 0H8L10 2H24V21H0Z" fill="#e8a917"/><rect x="0" y="4" width="24" height="17" fill="#ffd34e"/><rect x="4.5" y="12.5" width="15" height="8.5" rx="1" fill="#1a7ed6"/></svg>
<div class="r" style="left:837px;top:40.5px;width:6px;height:2.5px;background:#6e6e6e;border-radius:2px;"></div>
<svg class="r" style="left:872px;top:12px;" width="24" height="24" viewBox="0 0 24 24"><defs><linearGradient id="eg" x1="0" y1="0.2" x2="1" y2="0.7"><stop offset="0" stop-color="#2b9fe3"/><stop offset=".5" stop-color="#35c0e0"/><stop offset="1" stop-color="#62dc6a"/></linearGradient><linearGradient id="eb" x1="0" y1="0" x2="1" y2="1"><stop offset="0" stop-color="#1d7fd6"/><stop offset="1" stop-color="#1457a8"/></linearGradient></defs><circle cx="12" cy="12" r="12" fill="url(#eg)"/><path d="M0.2 13.5C1 19.5 6 24 12 24C15.5 24 18.6 22.6 20.8 20.3C16.5 21.8 11.2 20.6 9.6 16.8C8.4 13.8 10.2 10.8 13.6 10.4C9.2 8.6 3.2 9.4 0.2 13.5Z" fill="url(#eb)"/><path d="M10.5 15.2C10.8 17.8 13.8 19.2 17 19C19.5 18.8 21.3 17.8 22.4 16.6C20.5 17.1 17.5 17 16 15.6C15 14.7 15.6 13.2 16.8 12.6C14 11.5 10.3 12.4 10.5 15.2Z" fill="#dde5f6"/></svg>
<svg class="r" style="left:916px;top:13px;" width="24" height="21" viewBox="0 0 24 21"><rect x="6.5" y="0" width="17.5" height="21" rx="1" fill="#2b7cd3"/><rect x="6.5" y="7" width="17.5" height="7" fill="#185abd"/><rect x="6.5" y="14" width="17.5" height="7" fill="#103f91"/><rect x="0" y="5" width="12.5" height="12" rx="1" fill="#185abd"/><text x="6.25" y="14.5" font-size="10" font-family="Liberation Sans" font-weight="bold" fill="#fff" text-anchor="middle">W</text></svg>
<svg class="r" style="left:961px;top:13px;" width="21" height="19" viewBox="0 0 21 19"><rect x="0" y="0" width="21" height="19" rx="1.5" fill="#1f4fa5"/><rect x="0.5" y="16" width="20" height="3" fill="#153b80"/><text x="10.5" y="12.5" font-size="10.5" font-family="Liberation Sans" fill="#dfe9ff" text-anchor="middle">Ps</text></svg>
<svg class="r" style="left:1004px;top:13px;" width="24" height="21" viewBox="0 0 24 21"><rect x="6.5" y="0" width="17.5" height="21" rx="1" fill="#21a366"/><rect x="15" y="0" width="9" height="21" fill="#33c481"/><rect x="6.5" y="14" width="17.5" height="7" fill="#107c41"/><rect x="0" y="5" width="12.5" height="12" rx="1" fill="#107c41"/><text x="6.25" y="14.5" font-size="10" font-family="Liberation Sans" font-weight="bold" fill="#fff" text-anchor="middle">X</text></svg>
<svg class="r" style="left:1150px;top:20px;" width="12" height="8" viewBox="0 0 12 8"><path d="M1 7L6 1.5L11 7" fill="none" stroke="#1b1b1b" stroke-width="1.4"/></svg>
<svg class="r" style="left:1180px;top:18px;" width="17" height="12" viewBox="0 0 17 12"><path d="M1 4.5A10.5 10.5 0 0 1 16 4.5M3.5 7A7 7 0 0 1 13.5 7M6 9.3A3.5 3.5 0 0 1 11 9.3" fill="none" stroke="#1b1b1b" stroke-width="1.3"/><circle cx="8.5" cy="11" r="1.2" fill="#1b1b1b"/></svg>
<svg class="r" style="left:1203px;top:18px;" width="17" height="12" viewBox="0 0 17 12"><path d="M0.8 4H3.8L7.5 0.8V11.2L3.8 8H0.8Z" fill="none" stroke="#1b1b1b" stroke-width="1"/><path d="M10.5 3.5L15.5 8.5M15.5 3.5L10.5 8.5" stroke="#1b1b1b" stroke-width="1"/></svg>
<svg class="r" style="left:1227px;top:16px;" width="18" height="13" viewBox="0 0 18 13"><rect x="1" y="4" width="14" height="8" rx="1.2" fill="none" stroke="#1b1b1b" stroke-width="1.2"/><path d="M5 5.5H13.5V10.5H3Z" fill="#1b1b1b"/><rect x="15.5" y="6.5" width="1.8" height="3" rx=".6" fill="#1b1b1b"/><path d="M4.8 0.2L2.2 5.2H4.8L3 9.5" fill="none" stroke="#1b1b1b" stroke-width="1.1"/></svg>
<div class="t" style="top:5.95px;font-size:11.4px;line-height:20px;color:#1b1b1b;right:43px;">08:45</div>
<div class="t" style="top:21.77px;font-size:12.2px;line-height:20px;color:#1b1b1b;right:43px;">10/06/2023</div>
<div class="r" style="left:1330.5px;top:16.5px;width:15.5px;height:15.5px;border-radius:50%;background:#0a64c2;color:#fff;font-size:9.5px;line-height:15.5px;text-align:center">1</div>
</div>
</body></html>
